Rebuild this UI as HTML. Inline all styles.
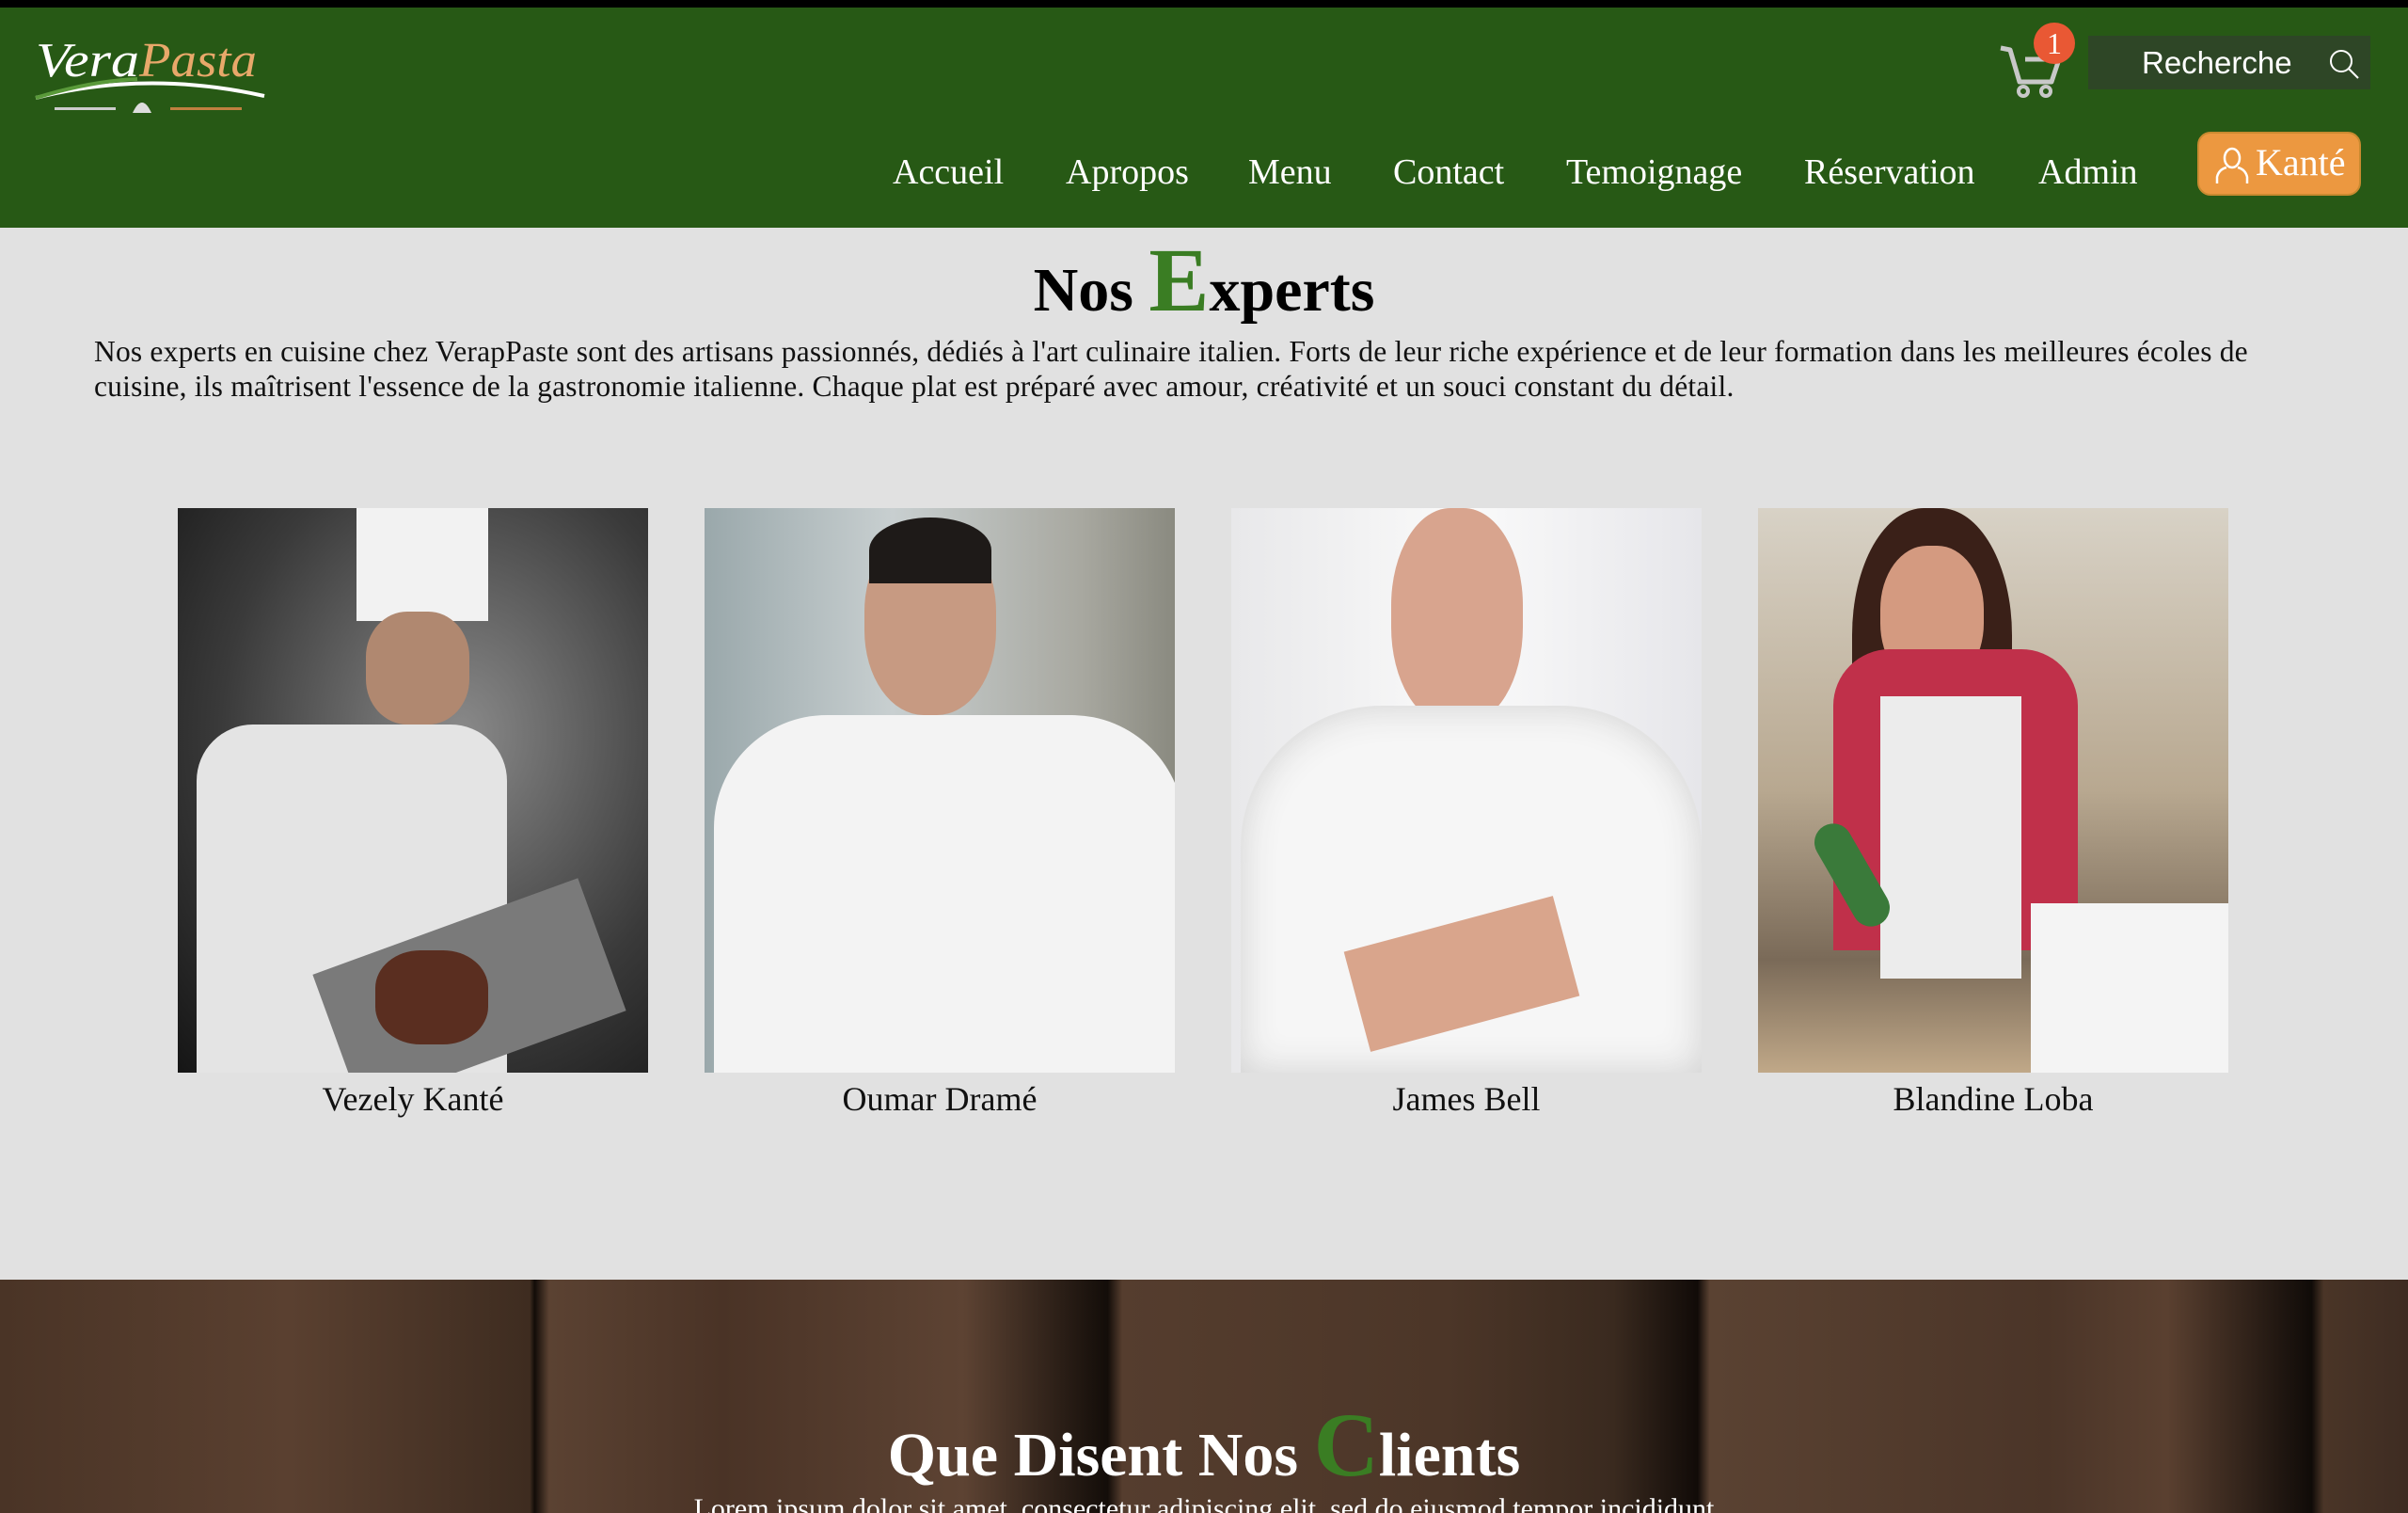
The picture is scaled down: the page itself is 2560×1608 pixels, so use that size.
<!DOCTYPE html>
<html><head><meta charset="utf-8"><style>
*{margin:0;padding:0;box-sizing:border-box}
body{width:2560px;height:1608px;overflow:hidden;background:#e1e1e1;font-family:"Liberation Serif",serif;position:relative}
.top{position:absolute;left:0;top:0;width:2560px;height:8px;background:#000}
header{position:absolute;left:0;top:8px;width:2560px;height:234px;background:#275915}
.nav a{position:absolute;top:153px;color:#fff;font-size:38px;text-decoration:none;white-space:nowrap}
.search{position:absolute;left:2220px;top:30px;width:300px;height:57px;background:#2e4626;color:#fff;font-family:"Liberation Sans",sans-serif;font-size:33px;line-height:57px;padding-left:57px}
.kante{position:absolute;left:2336px;top:132px;width:174px;height:68px;background:#ec9840;border:2px solid #c98a30;border-radius:14px;color:#fff;font-size:40px;line-height:62px;padding-left:60px}
h2{position:absolute;left:0;width:2560px;text-align:center;font-size:66px;font-weight:bold}
h2 span{color:#3a7d23;font-size:96px}
.p{position:absolute;left:100px;top:355px;width:2330px;font-size:31.5px;line-height:37px;color:#111;letter-spacing:0.2px}
.ph{position:absolute;top:540px;width:500px;height:600px;overflow:hidden}
.nm{position:absolute;top:1147px;width:500px;text-align:center;font-size:36px;color:#111}
.wood{position:absolute;left:0;top:1360px;width:2560px;height:248px;overflow:hidden;background:linear-gradient(90deg,#4a3426 0%,#5a4030 12%,#3e2c20 22%,#120c08 22.2%,#5b4232 22.8%,#4a3326 30%,#5d4333 40%,#130d09 46%,#553d2e 46.6%,#4c3628 60%,#3a2a1f 67%,#110b08 70.5%,#5a4232 71%,#4b3528 85%,#5a4030 90%,#100b08 96%,#4a3527 96.5%,#3e2c22 100%)}
</style></head><body>
<div class="top"></div>
<header>
 <svg style="position:absolute;left:36px;top:28px" width="250" height="90" viewBox="0 0 250 90">
  <text x="2" y="45" font-family="Liberation Serif" font-style="italic" font-size="52" fill="#fff" textLength="110" lengthAdjust="spacingAndGlyphs">Vera</text>
  <text x="112" y="45" font-family="Liberation Serif" font-style="italic" font-size="52" fill="#e8a86a" textLength="125" lengthAdjust="spacingAndGlyphs">Pasta</text>
  <path d="M2 68 Q120 38 245 66" stroke="#fff" stroke-width="4" fill="none"/>
  <path d="M2 68 Q60 50 110 48" stroke="#5a9a3a" stroke-width="4" fill="none"/>
  <rect x="22" y="78" width="65" height="3" fill="#ccc"/><rect x="145" y="78" width="76" height="3" fill="#c08040"/>
  <path d="M105 84 Q115 62 125 84 Z" fill="#ddd"/>
 </svg>
 <svg style="position:absolute;left:2125px;top:37px" width="70" height="60" viewBox="0 0 70 60">
  <path d="M2 6 L12 8 L22 42 L56 42 L64 18 L28 18" stroke="#c8c8c8" stroke-width="5" fill="none" stroke-linejoin="round"/>
  <circle cx="26" cy="52" r="5" stroke="#c8c8c8" stroke-width="4" fill="none"/><circle cx="50" cy="52" r="5" stroke="#c8c8c8" stroke-width="4" fill="none"/>
 </svg>
 <div style="position:absolute;left:2162px;top:16px;width:44px;height:44px;border-radius:50%;background:#e95834;color:#fff;font-size:32px;text-align:center;line-height:44px">1</div>
 <div class="search">Recherche
  <svg style="position:absolute;left:255px;top:13px" width="34" height="34" viewBox="0 0 34 34"><circle cx="14" cy="14" r="11" stroke="#fff" stroke-width="2" fill="none"/><path d="M22 22 L32 32" stroke="#fff" stroke-width="2"/></svg>
 </div>
 <div class="nav">
  <a style="left:949px">Accueil</a><a style="left:1133px">Apropos</a><a style="left:1327px">Menu</a><a style="left:1481px">Contact</a><a style="left:1665px">Temoignage</a><a style="left:1918px">Réservation</a><a style="left:2167px">Admin</a>
 </div>
 <div class="kante"><svg style="position:absolute;left:16px;top:14px" width="38" height="40" viewBox="0 0 38 40"><ellipse cx="19" cy="12" rx="8" ry="10" stroke="#fff" stroke-width="2.5" fill="none"/><path d="M3 39 L3 32 Q5 24 13 22 M35 39 L35 32 Q33 24 25 22" stroke="#fff" stroke-width="2.5" fill="none"/></svg>Kanté</div>
</header>
<h2 style="top:242px">Nos <span>E</span>xperts</h2>
<div class="p">Nos experts en cuisine chez VerapPaste sont des artisans passionnés, dédiés à l'art culinaire italien. Forts de leur riche expérience et de leur formation dans les meilleures écoles de cuisine, ils maîtrisent l'essence de la gastronomie italienne. Chaque plat est préparé avec amour, créativité et un souci constant du détail.</div>

<div class="ph" style="left:189px;background:radial-gradient(ellipse at 60% 40%,#8a8a8a,#3a3a3a 60%,#151515)">
 <div style="position:absolute;left:190px;top:0;width:140px;height:120px;background:#f2f2f2"></div>
 <div style="position:absolute;left:200px;top:110px;width:110px;height:120px;border-radius:40%;background:#b08870"></div>
 <div style="position:absolute;left:20px;top:230px;width:330px;height:370px;border-radius:60px 60px 0 0;background:#e4e4e4"></div>
 <div style="position:absolute;left:160px;top:440px;width:300px;height:150px;background:#7a7a7a;transform:rotate(-20deg)"></div>
 <div style="position:absolute;left:210px;top:470px;width:120px;height:100px;border-radius:40%;background:#5a2e20"></div>
</div>
<div class="ph" style="left:749px;background:linear-gradient(90deg,#9aa8ab,#c8cfd0 40%,#a8a8a0 80%,#8a8a80)">
 <div style="position:absolute;left:170px;top:20px;width:140px;height:200px;border-radius:45%;background:#c79a82"></div>
 <div style="position:absolute;left:175px;top:10px;width:130px;height:70px;border-radius:50% 50% 0 0;background:#1e1a18"></div>
 <div style="position:absolute;left:10px;top:220px;width:500px;height:380px;border-radius:120px 120px 0 0;background:#f3f3f3"></div>
</div>
<div class="ph" style="left:1309px;background:linear-gradient(90deg,#e8e8ea,#fafafa 50%,#e6e6ea)">
 <div style="position:absolute;left:170px;top:0;width:140px;height:230px;border-radius:45%;background:#d8a48e"></div>
 <div style="position:absolute;left:10px;top:210px;width:490px;height:390px;border-radius:150px 150px 0 0;background:#f6f6f6;box-shadow:inset 0 0 40px #d0d0d0"></div>
 <div style="position:absolute;left:130px;top:440px;width:230px;height:110px;background:#d9a58c;transform:rotate(-15deg)"></div>
</div>
<div class="ph" style="left:1869px;background:linear-gradient(180deg,#d8d2c6,#b8a890 50%,#7a6a58 80%,#c0a888)">
 <div style="position:absolute;left:100px;top:0;width:170px;height:300px;border-radius:45%;background:#3a2018"></div>
 <div style="position:absolute;left:130px;top:40px;width:110px;height:150px;border-radius:45%;background:#d49a80"></div>
 <div style="position:absolute;left:80px;top:150px;width:260px;height:320px;border-radius:60px 60px 0 0;background:#c0304a"></div>
 <div style="position:absolute;left:130px;top:200px;width:150px;height:300px;background:#ececec"></div>
 <div style="position:absolute;left:290px;top:420px;width:210px;height:180px;background:#f4f4f4"></div>
 <div style="position:absolute;left:80px;top:330px;width:40px;height:120px;border-radius:20px;background:#3a7a3a;transform:rotate(-30deg)"></div>
</div>
<div class="nm" style="left:189px">Vezely Kanté</div>
<div class="nm" style="left:749px">Oumar Dramé</div>
<div class="nm" style="left:1309px">James Bell</div>
<div class="nm" style="left:1869px">Blandine Loba</div>

<div class="wood">
 <h2 style="top:120px;color:#fff">Que Disent Nos <span>C</span>lients</h2>
 <div style="position:absolute;left:0;width:2560px;top:227px;text-align:center;color:#fff;font-size:30px">Lorem ipsum dolor sit amet, consectetur adipiscing elit, sed do eiusmod tempor incididunt</div>
</div>
</body></html>
